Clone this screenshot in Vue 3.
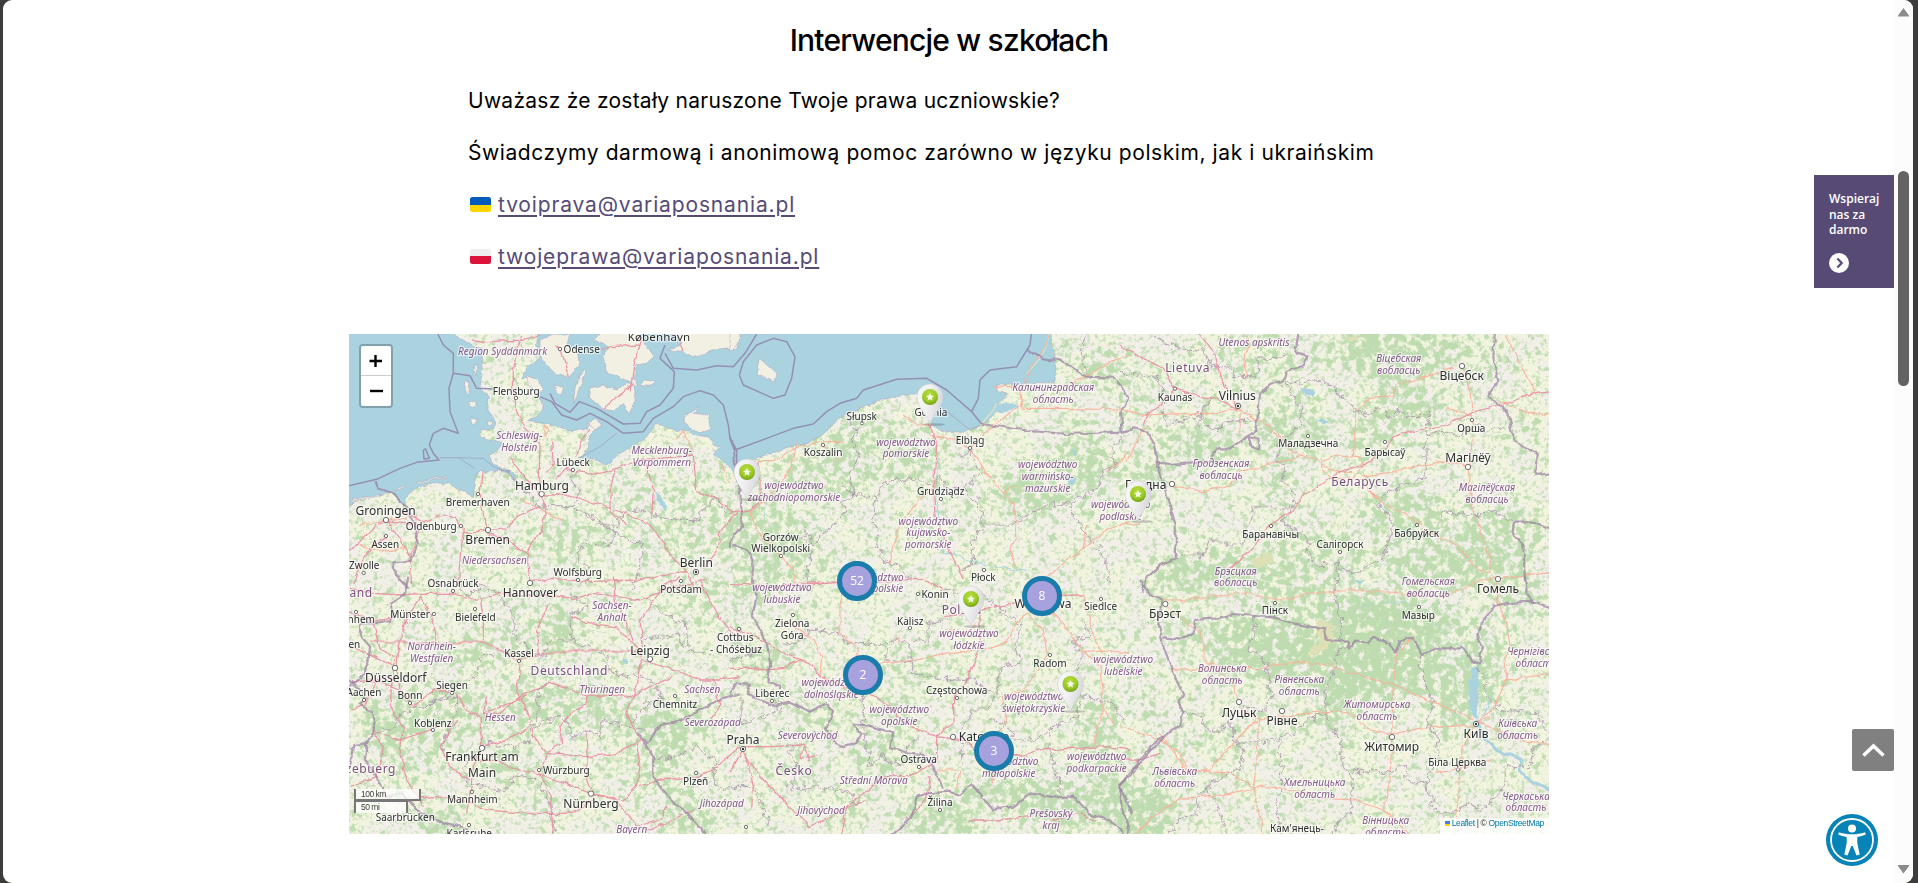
<script setup>
const W = 1200
const H = 500

// The map is described in six sheets, each drawn at triple scale.
const sheets = [
  { x: -9, y: -9 },
  { x: 381, y: -9 },
  { x: 771, y: -9 },
  { x: -9, y: 246 },
  { x: 381, y: 246 },
  { x: 771, y: 246 },
]
const at = (i) => `translate(${sheets[i].x} ${sheets[i].y}) scale(.33333)`

const sea = [
  [0, '20,20 295,20 345,27 350,35 370,45 400,65 430,70 426,110 425,150 420,190 445,215 440,240 455,270 470,290 460,312 420,315 415,335 465,345 485,360 470,375 450,390 460,420 490,430 515,440 535,478 510,450 480,434 440,442 420,435 405,460 400,515 375,500 350,490 330,470 240,483 205,505 190,545 165,515 150,503 60,522 20,548'],
  [0, '590,20 590,60 600,100 560,130 545,160 575,155 600,170 590,185 570,190 600,220 610,250 590,275 560,290 620,295 660,310 700,320 740,310 760,280 785,300 750,330 745,370 720,398 760,402 800,420 830,390 870,370 920,335 950,295 1000,315 1040,320 1070,330 1100,335 1120,350 1140,370 1120,385 1150,410 1180,432 1195,465 1235,405 1270,395 1330,370 1410,350 1450,330 1480,300 1500,275 1570,245 1610,230 1680,210 1725,207 1760,230 1745,245 1770,290 1800,318 1870,322 1920,300 1960,270 1975,235 2005,205 1970,200 1965,180 2020,178 2070,172 2140,175 2145,120 2140,60 2130,20'],
]
const islands = [
  [0, '600,45 640,27 690,30 680,60 715,80 720,115 690,150 650,150 620,120 600,90'],
  [0, '765,45 785,20 900,20 915,60 940,95 920,115 890,120 880,155 900,185 870,170 830,150 800,140 785,95 810,70 790,55'],
  [0, '745,190 790,180 830,195 855,180 880,170 885,200 880,240 870,268 850,235 820,255 785,248 750,220'],
  [0, '730,130 738,140 715,200 700,235 705,190'],
  [0, '560,150 590,160 612,195 590,205 565,180'],
  [0, '640,180 670,190 665,208 645,200'],
  [0, '910,165 950,170 935,182 905,178'],
  [0, '985,75 1020,60 1010,20 1205,20 1190,70 1130,75 1060,95 1030,80'],
  [0, '745,290 765,280 785,300 765,315'],
  [0, '1030,275 1075,245 1062,265 1105,270 1110,310 1080,320 1050,310 1030,295'],
  [0, '378,165 390,175 385,210 375,200'],
  [0, '385,235 405,228 412,242 395,250'],
  [0, '395,275 418,285 400,300'],
  [0, '402,120 410,120 408,150 400,145'],
  [0, '440,288 456,290 450,302 440,300'],
  [0, '160,495 200,482 200,486 165,499'],
  [0, '230,470 320,455 320,459 235,474'],
  [0, '30,528 120,508 120,512 30,533'],
  [1, '88,100 138,145 132,170 78,150'],
  [1, '0,20 30,27 30,45 10,75 0,78'],
]
const water = [
  [1, '800,235 835,235 870,240 830,260 795,262'],
  [5, '1055,260 1075,262 1078,300 1072,350 1070,420 1060,410 1048,370 1042,310 1055,290'],
  [0, '945,500 965,520 985,545 975,555 950,525'],
  [3, '845,235 868,240 865,250 850,246'],
  [2, '540,185 580,195 575,212 550,208'],
  [2, '585,285 630,285 610,295'],
  [1, '1010,450 1040,460 1030,480 1015,475'],
  [1, '1025,370 1040,385 1035,400'],
  [1, '930,480 945,490 935,500'],
  [1, '102,555 108,570 104,585'],
  [5, '690,0 735,0 720,10'],
]
const rivers = [
  [5, '1070,420 1090,470 1130,510 1180,530 1210,540 1195,570 1240,610 1300,635', 9],
  [5, '1110,350 1095,400 1075,420', 3],
  [1, '620,530 640,680 700,700 770,720 830,730 900,740', 3],
  [1, '620,360 625,420 615,480 618,530', 2],
  [5, '720,80 830,65 900,80 980,170 1040,210', 2],
]

const country = [
  [1, '10,660 60,680 70,720 65,780'],
  [1, '0,340 12,370 15,420 30,500 35,560 38,600 0,650 0,670'],
  [1, '755,297 900,318 1010,327 1175,320 1215,310 1250,320 1275,360 1285,420 1310,510 1337,600 1338,700 1290,720 1250,760 1240,800'],
  [1, '890,75 940,100 985,105 1020,120 1070,155 1150,158 1180,190 1195,220 1170,265 1175,318'],
  [2, '110,415 150,420 215,415 270,408 290,370 330,370 380,335 405,320 415,260 420,210 450,180 490,165 500,140 555,120 562,95 525,85 535,27'],
  [2, '385,335 415,345 420,370 395,365 385,335'],
  [2, '1125,20 1120,100 1135,170 1105,210 1135,240 1160,255 1180,340 1215,370 1250,390 1245,450 1290,445'],
  [2, '1290,615 1240,590 1185,590 1180,630 1210,660 1215,770'],
  [4, '70,0 80,50 65,110 110,190 120,250 115,310 150,320 150,330'],
  [4, '0,340 20,310 60,315 50,345 130,375 180,365 240,395 290,370 310,395 285,450 330,500 375,490 395,460 370,430 430,440 490,460 480,500 530,520 580,525 610,560 640,625'],
  [4, '480,770 540,720 560,650 600,640 655,635 690,645 725,612 755,650 790,690 850,680 900,640 990,655 1030,650 1080,700 1140,720 1180,760'],
  [4, '1205,700 1170,620 1220,560 1300,470'],
  [5, '60,0 90,45 125,60 115,130 130,200 155,270 190,345 175,360 190,400 180,435 90,500 30,580 0,620 5,690 25,720 20,770'],
  [5, '130,172 160,175 185,180 220,155 225,120 290,115 340,102 400,108 460,112 520,130 615,148 620,180 685,185 690,205 705,185 740,190 760,170 810,190 825,218 840,185 880,170 905,225 960,205 1030,205 1055,245 1080,250 1085,200 1070,180 1085,130 1125,80 1180,68 1240,65 1290,80'],
  [5, '1240,65 1220,40 1215,-10'],
  [3, '1200,340 1110,370 1080,390 1020,425 960,435 920,490 895,460 940,530 940,590 990,660 1030,690 1080,740 1100,770'],
  [3, '205,-10 195,40 155,70 160,100 150,120 105,130 60,130 60,165 90,200 85,250 60,300 27,320'],
  [3, '27,300 60,330 75,360 60,370 95,395 105,445 95,470 80,490 40,495 30,560'],
  [3, '80,490 75,540 110,590 140,650 190,640 230,690 300,725 360,740 380,750'],
  [0, '110,465 115,490 160,505 190,540 225,600 230,660 215,710 160,715 165,750 205,790'],
]
const maritime = [
  [0, '290,20 310,60 340,85 340,145 390,152 410,190 460,192'],
  [0, '340,145 327,190 330,260 355,325 310,310 280,325 268,360 280,385 297,405 230,412 180,430 110,463 27,482'],
  [0, '250,375 257,372 268,400 252,402 250,375'],
  [0, '600,215 635,230 665,270 710,285 750,265 800,290 850,325 910,320 940,280 1000,245 1030,215 1080,197 1120,210 1150,240 1165,300 1170,340 1190,375 1190,470'],
  [0, '630,205 645,235 690,262 718,230 770,250 850,297 900,295 920,260 960,240 1000,190 1003,140 960,100 975,60'],
  [0, '975,85 1000,130 1070,135 1130,122 1180,125 1215,85 1250,27'],
  [1, '28,150 40,110 80,60 130,40 170,50 195,95 185,160 165,210 130,220 85,200 40,180 28,150'],
  [1, '0,335 15,375 110,340 190,310 250,297 290,260 330,235 380,220 400,195 500,163 590,160 650,195 725,260 755,297'],
  [1, '905,20 900,60 860,125 780,135 750,165 745,220 725,260'],
]
const lightSea = [
  [0, '300,398 355,398 405,430'],
  [0, '355,398 430,400 460,425 500,440'],
  [0, '830,325 780,365 720,398'],
  [1, '640,250 720,315 752,300'],
]
const region = [
  [0, '480,432 520,450 535,480 570,510 600,545 700,545 720,500 690,450 720,440'],
  [0, '690,545 740,570 790,600 830,600 850,560 900,555 1000,590 1060,590 1100,540 1130,520 1165,570'],
  [0, '790,600 850,640 905,660 905,730 870,790'],
  [0, '715,670 760,655 810,660 830,610'],
  [0, '715,670 720,710 750,740 740,790'],
  [1, '350,280 380,310 370,340 385,400 360,450 375,510 340,485 370,510 440,520 430,590 445,620 440,660 460,710 510,720 540,770'],
  [1, '440,520 460,470 540,460 600,480 635,450 640,490 700,490 740,530 760,600 730,650 730,720 690,740'],
  [1, '690,390 720,380 750,440 700,490'],
  [1, '760,600 850,600 870,580 940,545 1020,530 1035,590 1060,600 1070,640 1110,670 1130,720 1140,780'],
  [1, '1170,340 1140,390 1160,420 1120,440 1100,490 1030,530'],
  [1, '210,640 230,620 250,660 330,575 350,560 330,530 375,505'],
  [1, '225,640 245,700 230,750 235,790'],
  [1, '1065,30 1055,110 1080,150'],
  [2, '100,30 150,60 220,80 250,70 270,120 330,130 345,155 410,155 415,100 500,95'],
  [2, '0,145 60,150 110,155 130,180 130,260 140,300 180,290 235,270 280,220 250,250 235,300 290,310 320,290 400,285'],
  [2, '490,175 540,240 545,300 480,350 465,410 495,420 485,470 520,500 525,540 490,590 560,640 570,700 590,720 650,715 650,770'],
  [2, '490,175 610,165 680,230 740,270 790,250 810,280 840,255 890,280 930,260 920,330 915,460 850,480 790,510 780,540 820,600 790,700 700,750 650,720'],
  [2, '920,330 990,320 1020,335 1060,300 1100,320 1150,300'],
  [2, '950,600 970,560 1080,570 1120,560 1180,590'],
  [2, '530,550 400,545 390,600 370,650 340,665 270,640 250,690 175,685'],
  [3, '340,-10 380,50 420,20 470,40 520,100 530,180 560,190 560,220 610,225 640,180 700,180 690,100 740,80 690,40'],
  [3, '460,230 430,230 400,300 350,310 300,360 250,380 180,400 160,450 110,450'],
  [3, '250,380 350,350 350,410 310,470 310,520 380,550 440,490 520,500 580,480 570,440 600,390 590,330 630,300'],
  [3, '580,440 660,410 700,450 690,475 750,450 780,470 790,420 870,440 920,450'],
  [3, '700,180 800,230 810,280 900,290 940,310 970,350 920,370 870,440'],
  [3, '910,180 1010,165 1040,210 1120,225'],
  [3, '380,550 370,600 420,620 500,630 520,580 580,590 620,640 640,720 640,770'],
  [3, '915,50 970,100 1040,130 1040,200'],
  [3, '950,540 1040,520 1070,500 1130,550 1120,600 1150,630 1200,620'],
  [4, '0,240 70,220 110,190'],
  [4, '160,190 220,180 240,150 320,160 350,190 420,190 470,200 465,240 540,245 550,280 640,295 730,300 790,340 780,390 730,390 700,440 690,500 700,560'],
  [4, '540,190 590,180 600,130 650,120'],
  [4, '540,245 540,190 470,180'],
  [4, '800,350 810,260 870,250 860,200 870,140 830,100 740,40 640,30'],
  [4, '780,420 830,430 850,480 910,480 970,440 1040,410 1060,350 1150,370 1180,420'],
  [4, '965,440 960,500 975,570 990,640'],
  [4, '1050,350 1040,280 1055,230 1030,180 1080,170 1060,120'],
  [4, '440,290 400,350 400,430'],
  [4, '30,350 30,430 130,400 160,390 130,350'],
  [4, '175,500 200,560 180,630 260,620 370,640 370,680 400,650'],
  [4, '400,430 420,560 460,530 520,560'],
  [4, '0,620 70,620 100,690 120,740'],
  [4, '560,480 530,500 530,520'],
  [5, '190,395 240,405 265,450 300,455 330,420 345,490 380,485 460,480 520,460 580,410 620,400 615,330 640,280 660,210 690,190'],
  [5, '400,108 405,150 390,200 440,250 455,350 430,390 370,380'],
  [5, '345,490 370,510 360,570 320,580 250,630 280,650 310,730 330,770'],
  [5, '480,480 485,600 470,680 485,770'],
  [5, '615,400 660,480 670,560 700,600 690,700 640,740 640,770'],
  [5, '695,575 810,575 850,555 860,600 920,610 930,570 960,540 950,470 920,430 940,370 900,260 905,225'],
  [5, '920,610 940,690 1000,700 1050,670 1080,690 1140,640 1160,560 1230,560 1240,510 1290,470 1250,400 1150,390 1100,350 1100,300 1070,260'],
  [5, '150,760 170,720 230,700 240,640 280,620'],
  [5, '655,0 640,40 665,120 655,180'],
]
const motorways = [
  [0, '400,45 440,50 560,45 600,30'],
  [0, '548,30 530,70 520,140 520,180 530,260 555,310 600,360 598,430 600,510 620,560 600,620 560,680 570,770'],
  [0, '645,60 665,80 685,150'],
  [0, '780,75 815,65 900,60 905,27'],
  [0, '900,60 880,130 870,200'],
  [0, '795,250 830,215 880,175'],
  [0, '1010,30 1030,80'],
  [0, '635,350 640,420 620,440'],
  [0, '650,460 680,430 700,440 780,445 830,430 900,405 960,400 1060,390 1070,500 1130,520 1180,560'],
  [0, '710,395 720,350 750,310'],
  [0, '600,510 690,510 780,540 870,570 930,600 960,640 990,690 1040,740 1060,790'],
  [0, '825,435 810,500 810,560 860,600'],
  [0, '910,400 940,490 935,580'],
  [0, '600,545 540,570 500,610 430,620 370,620 350,580 310,570 250,590 190,560'],
  [0, '430,440 420,500 430,570 445,620'],
  [0, '510,395 540,440 575,480 600,515'],
  [0, '445,625 510,650 560,690'],
  [0, '370,620 360,700 355,780'],
  [0, '140,585 180,640 215,700'],
  [0, '27,680 70,640 110,600 140,590 230,600'],
  [0, '225,560 235,620 210,700 215,780'],
  [0, '40,780 75,690 100,660 140,640'],
  [0, '1190,560 1140,620 1130,680 1090,730'],
  [0, '570,770 640,760 740,770 900,765 1040,740'],
  [1, '0,565 60,555 90,530 90,470 80,410'],
  [1, '580,230 600,300 620,360 610,480 615,570 650,660 680,720 700,760'],
  [1, '200,775 250,770 320,775 440,760'],
  [2, '0,60 70,100 130,130 165,190 240,215 290,220 350,250'],
  [2, '235,20 280,80 300,150 350,245'],
  [2, '165,190 120,240 80,270 70,300'],
  [2, '330,730 400,670 450,600 520,555 545,515 600,480 660,440 730,420 800,370 820,335 900,315 980,300 1060,260 1150,240 1220,210 1290,200'],
  [3, '27,25 100,40 190,45 240,40 330,40 400,60 440,50 480,40 560,50 620,45 700,55 760,40 830,50 900,60 1000,20 1100,0'],
  [3, '240,50 200,120 180,190 170,260 180,330 220,380'],
  [3, '240,45 280,120 290,185 240,190'],
  [3, '27,95 100,125 160,110'],
  [3, '90,180 200,190 290,190 430,185 480,210 530,240 590,225 700,210 820,215 900,215'],
  [3, '430,180 430,120 420,50'],
  [3, '630,70 590,150 595,220'],
  [3, '690,110 740,130 830,140 870,180 900,210 905,240 1000,270 1080,300 1140,300 1200,290'],
  [3, '820,-10 825,60 860,130 880,180'],
  [3, '910,200 900,120 970,20 1020,-10'],
  [3, '1080,0 1130,100 1170,150 1200,170'],
  [3, '540,250 530,340 570,410 580,470 620,520 740,530 830,520 900,480 860,400 880,350 905,240'],
  [3, '220,380 280,330 350,340 380,390 420,410 425,500 400,560 390,640 380,700'],
  [3, '180,330 90,300 27,310'],
  [3, '420,400 480,400 540,350 630,310 740,345 800,345 870,350 930,320 1000,290'],
  [3, '740,345 740,370 690,400 660,440 665,490 620,520 600,580 630,650 640,760'],
  [3, '430,500 500,480 570,440'],
  [3, '400,540 460,540 540,570 600,585 680,610 750,640 850,660 890,620 900,560 890,490'],
  [3, '740,450 745,530 740,600 755,640'],
  [3, '760,660 690,700 560,700 440,690 400,670 320,650 200,660'],
  [3, '755,645 820,650 890,740 960,720 980,680'],
  [3, '180,190 160,260 150,380 190,440 180,520 200,600 250,680'],
  [3, '350,420 300,500 330,560 390,600'],
  [3, '30,200 80,220 160,260'],
  [3, '440,350 430,400 560,350'],
  [3, '1120,295 1140,380 1110,420'],
  [3, '1200,500 1130,560 1070,590 960,600 900,620'],
  [3, '890,740 930,750 1060,690'],
  [3, '100,130 120,210 160,230'],
  [3, '27,390 80,370 110,300 160,290'],
  [3, '100,450 180,480 240,460 300,440'],
  [3, '27,620 110,590 130,500 100,450'],
  [4, '0,10 120,20 200,15 340,10'],
  [4, '440,10 560,-5 610,10 640,30'],
  [4, '640,110 720,100 800,80 860,70 900,50 1060,48'],
  [4, '0,140 80,170 160,220 240,250 270,290 340,320 440,350 520,420 560,450 620,470 700,480 750,520 880,525 930,510 1130,500 1200,510'],
  [4, '0,265 60,265 110,270 160,265 210,240'],
  [4, '740,60 750,100 750,200 710,310 670,350 672,430 640,450 620,470 620,540 580,570 540,590 460,590 430,620 350,680 330,770'],
  [4, '40,520 100,600 180,680 240,740 340,690 410,660'],
  [4, '40,500 120,500 220,495 240,540'],
  [4, '40,510 0,580'],
  [4, '50,530 70,620 65,680'],
  [4, '220,500 210,540 260,520'],
  [4, '720,720 800,720 900,710'],
  [4, '960,720 1050,700 1100,720'],
  [4, '600,590 590,660 530,720'],
  [5, '0,540 60,540 120,520'],
]
const trunks = [
  [0, '590,340 630,320 610,300 620,345'],
  [0, '540,525 590,545 670,590'],
  [0, '1010,340 1030,320 1060,380'],
  [0, '1140,420 1170,480'],
  [0, '60,600 200,580'],
  [0, '60,660 120,680 200,670'],
  [1, '80,410 130,410 190,370 270,350 340,350'],
  [1, '200,350 190,410 150,480 90,540 60,560'],
  [1, '270,355 330,410'],
  [1, '60,560 80,620 140,680 190,740 195,780'],
  [1, '520,270 560,300 600,300'],
  [1, '600,330 660,340 720,370 760,430 800,480 850,540 860,620 840,670 855,720'],
  [1, '720,370 780,310 870,240'],
  [1, '795,185 870,190 880,250 1000,250 1170,255'],
  [1, '875,240 870,200 900,130 950,60 955,27'],
  [1, '1000,180 1060,160 1140,110 1200,90'],
  [1, '820,500 860,480'],
  [1, '620,480 560,530 500,620 480,720'],
  [1, '1200,590 1120,620 1060,670 990,720 940,770'],
  [1, '1060,670 1070,600'],
  [1, '1130,440 1200,380'],
  [2, '0,250 60,270 220,265 290,265 350,250 440,300 520,380 600,410 640,440 700,440'],
  [2, '380,155 370,100 390,60 380,27'],
  [2, '360,255 360,330'],
  [2, '605,405 650,390 720,395 730,420 700,460 640,460 605,430 605,405'],
  [2, '700,390 710,260 750,220 820,215 830,180 900,160 1000,130'],
  [2, '155,480 250,500 330,480 360,440 450,420 550,390'],
  [2, '20,410 60,330 80,300'],
  [2, '730,455 820,440 960,410 1040,425'],
  [2, '1030,130 1050,200 1060,300 1050,420 1045,480 1060,560 1110,700 1110,750'],
  [2, '720,465 780,530 880,580 960,640 1010,660 1060,720 1110,750'],
  [2, '1140,230 1250,270 1290,265'],
  [2, '1160,30 1210,140 1245,200'],
  [2, '1060,270 980,250'],
  [2, '1140,760 1290,740'],
  [2, '0,600 60,595'],
  [4, '340,30 330,80 330,160 380,200 390,270'],
  [4, '390,280 460,250 560,240 640,220 740,210'],
  [4, '180,130 250,180 275,230 270,290'],
  [4, '640,170 660,150 700,160 740,130'],
  [4, '920,80 860,130 830,190 760,210'],
  [4, '960,90 1000,130 1060,210 1110,260 1120,380 1090,500'],
  [4, '900,110 940,150 950,220 920,280 880,330 820,350 830,420 800,470'],
  [4, '1060,215 1120,210 1200,220'],
  [4, '1060,40 1090,170 1120,220'],
  [4, '790,530 790,610'],
  [4, '510,170 510,190'],
  [4, '620,570 690,570 680,620'],
  [4, '1120,380 1150,440'],
  [5, '130,60 200,60 290,45 390,40 480,60 580,40 700,30 850,40 970,50 1060,10 1130,-10'],
  [5, '135,75 200,130 240,160 260,250 320,260'],
  [5, '260,250 340,310 360,380 420,420 520,405 610,395 680,395 740,440 810,465 900,445 1060,435 1110,410'],
  [5, '150,268 420,265 540,245 620,255 700,280 820,315 900,350 1000,390 1060,420'],
  [5, '815,460 820,310 830,220 880,170'],
  [5, '415,420 410,560 400,620 420,700 430,770'],
  [5, '0,440 120,480 180,520 200,570 330,580 400,620 520,630 600,655 700,660 790,690 850,740 870,770'],
  [5, '400,625 280,650 180,655 100,710 50,760'],
  [5, '410,420 340,490 270,570 190,580'],
  [5, '120,460 190,560'],
  [5, '1060,440 1030,500 1020,600 1010,700 1010,740'],
  [5, '1075,430 1130,370 1160,300 1155,240 1170,200 1160,130 1130,60 1130,0'],
  [5, '815,470 810,600 790,690'],
  [5, '1075,430 1110,440 1180,480 1290,490'],
  [5, '1160,300 1290,280'],
  [5, '950,580 1040,560 1110,540'],
]

// Woodland density: sheet, centre, radii, weight
const woods = [
  [0, 640, 660, 110, 60, .5], [0, 950, 500, 120, 60, .35], [0, 1080, 620, 130, 90, .4], [0, 760, 620, 90, 60, .35],
  [0, 930, 660, 60, 90, .35], [0, 340, 700, 80, 50, .2], [0, 1120, 480, 60, 60, .3],
  [1, 300, 440, 150, 100, .55], [1, 400, 330, 110, 70, .5], [1, 100, 620, 120, 110, .6], [1, 900, 510, 110, 70, .8],
  [1, 1060, 400, 90, 90, .6], [1, 560, 400, 90, 90, .5], [1, 1120, 130, 70, 50, .7], [1, 1100, 480, 70, 60, .5],
  [1, 680, 560, 90, 50, .3], [1, 200, 700, 130, 60, .45], [1, 1000, 80, 60, 50, .4],
  [2, 430, 90, 150, 90, .35], [2, 840, 70, 170, 100, .65], [2, 700, 70, 100, 60, .6], [2, 240, 360, 130, 60, .7],
  [2, 520, 310, 120, 90, .6], [2, 850, 240, 130, 80, .6], [2, 480, 470, 60, 90, .5], [2, 80, 450, 70, 60, .55],
  [2, 1150, 640, 130, 110, .6], [2, 840, 560, 120, 90, .65], [2, 600, 690, 160, 100, .5], [2, 300, 740, 200, 60, .8],
  [2, 1080, 100, 90, 100, .35], [2, 960, 730, 180, 70, .7], [2, 760, 350, 100, 60, .5], [2, 1230, 320, 60, 80, .3],
  [2, 1000, 620, 110, 80, .4], [2, 60, 190, 60, 60, .4],
  [3, 660, 150, 55, 65, 1], [3, 400, 220, 80, 50, .65], [3, 140, 440, 80, 90, .7], [3, 330, 400, 130, 100, .5],
  [3, 220, 560, 80, 50, .5], [3, 700, 370, 140, 70, .6], [3, 540, 380, 70, 110, .55], [3, 530, 180, 50, 60, .6],
  [3, 480, 560, 60, 50, .7], [3, 300, 720, 70, 40, .9], [3, 1000, 440, 110, 60, .75], [3, 980, 520, 60, 100, .6],
  [3, 1040, 710, 90, 80, .65], [3, 850, 420, 80, 50, .6], [3, 1090, 60, 90, 60, .4], [3, 880, 570, 90, 80, .35],
  [3, 220, 440, 60, 60, .45], [3, 620, 620, 70, 90, .35], [3, 540, 60, 70, 40, .35],
  [4, 60, 30, 90, 70, .5], [4, 120, 230, 90, 50, .6], [4, 270, 400, 110, 40, .6], [4, 340, 700, 90, 60, .4],
  [4, 450, 520, 80, 70, .55], [4, 620, 720, 130, 60, .75], [4, 820, 630, 160, 50, .7], [4, 1000, 680, 140, 70, .75],
  [4, 1100, 450, 60, 110, .7], [4, 900, 270, 60, 50, .35], [4, 850, 380, 60, 40, .35], [4, 500, 400, 60, 70, .45],
  [4, 560, 250, 100, 60, .35], [4, 180, 560, 90, 60, .3], [4, 940, 120, 50, 60, .35], [4, 1150, 620, 70, 80, .6],
  [5, 220, 160, 80, 60, .5], [5, 360, 200, 90, 110, .75], [5, 500, 210, 130, 100, .85], [5, 700, 260, 110, 110, 1],
  [5, 830, 250, 110, 100, .9], [5, 770, 110, 170, 70, 1], [5, 930, 140, 110, 60, .8], [5, 1010, 310, 110, 100, .7],
  [5, 1100, 220, 35, 130, .8], [5, 650, 340, 60, 70, .9], [5, 60, 700, 90, 90, .85], [5, 280, 480, 120, 35, .5],
  [5, 620, 430, 100, 40, .55], [5, 520, 50, 130, 50, .6], [5, 1000, 430, 50, 60, .5], [5, 1150, 430, 70, 60, .4],
  [5, 130, 680, 70, 60, .5], [5, 160, 20, 90, 40, .5], [5, 1200, 40, 70, 60, .6], [5, 80, 380, 60, 60, .3],
]
const marsh = [
  [5, '600,125 640,130 645,190 610,215 570,235 570,205 595,180 590,150'],
  [2, '395,705 440,680 465,700 440,725 400,720'],
  [2, '680,30 720,30 715,45 690,50'],
]

// Labels: sheet, centre x, centre y, text, kind
const labels = [
  [0, 957, 37, 'København', 'M'], [0, 488, 78, 'Region Syddanmark', 'r'], [0, 725, 74, 'Odense', 'c'], [0, 529, 198, 'Flensburg', 'c'],
  [0, 538, 332, 'Schleswig-', 'r'], [0, 538, 367, 'Holstein', 'r'], [0, 965, 377, 'Mecklenburg-', 'r'], [0, 965, 412, 'Vorpommern', 'r'],
  [0, 700, 412, 'Lübeck', 'c'], [0, 606, 481, 'Hamburg', 'C'], [0, 413, 531, 'Bremerhaven', 'c'], [0, 137, 556, 'Groningen', 'C'],
  [0, 274, 603, 'Oldenburg', 'c'], [0, 443, 644, 'Bremen', 'C'], [0, 136, 657, 'Assen', 'c'], [0, 463, 706, 'Niedersachsen', 'r'],
  [0, 73, 721, 'Zwolle', 'c'], [0, 713, 741, 'Wolfsburg', 'c'], [0, 1069, 712, 'Berlin', 'C'], [0, 339, 775, 'Osnabrück', 'c'],
  [1, 395, 273, 'Słupsk', 'c'], [1, 603, 261, 'Gdynia', 'c'], [1, 279, 382, 'Koszalin', 'c'], [1, 528, 351, 'województwo', 'r'],
  [1, 528, 386, 'pomorskie', 'r'], [1, 720, 345, 'Elbląg', 'c'], [1, 970, 187, 'Калининградская', 'r'], [1, 970, 222, 'область', 'r'],
  [1, 953, 418, 'województwo', 'r'], [1, 953, 454, 'warmińsko-', 'r'], [1, 953, 489, 'mazurskie', 'r'], [1, 632, 499, 'Grudziądz', 'c'],
  [1, 192, 480, 'województwo', 'r'], [1, 192, 516, 'zachodniopomorskie', 'r'], [1, 595, 588, 'województwo', 'r'], [1, 595, 623, 'kujawsko-', 'r'],
  [1, 595, 659, 'pomorskie', 'r'], [1, 152, 636, 'Gorzów', 'c'], [1, 152, 671, 'Wielkopolski', 'c'], [1, 760, 758, 'Płock', 'c'],
  [1, 432, 756, 'województwo', 'r'], [1, 432, 791, 'wielkopolskie', 'r'],
  [2, 402, 52, 'Utenos apskritis', 'r'], [2, 203, 128, 'Lietuva', 'N'], [2, 165, 216, 'Kaunas', 'c'], [2, 352, 212, 'Vilnius', 'C'],
  [2, 836, 100, 'Віцебская', 'r'], [2, 836, 136, 'вобласць', 'r'], [2, 1025, 153, 'Віцебск', 'C'], [2, 1054, 309, 'Орша', 'c'],
  [2, 565, 355, 'Маладзечна', 'c'], [2, 795, 382, 'Барысаў', 'c'], [2, 1044, 398, 'Магілёў', 'C'], [2, 303, 414, 'Гродзенская', 'r'],
  [2, 303, 450, 'вобласць', 'r'], [2, 720, 471, 'Беларусь', 'N'], [2, 77, 480, 'Гродна', 'C'], [2, 1101, 487, 'Магілёўская', 'r'],
  [2, 1101, 522, 'вобласць', 'r'], [2, 2, 539, 'województwo', 'r'], [2, 2, 574, 'podlaskie', 'r'], [2, 452, 628, 'Баранавічы', 'c'],
  [2, 890, 625, 'Бабруйск', 'c'], [2, 660, 659, 'Салігорск', 'c'], [2, 347, 738, 'Брэсцкая', 'r'], [2, 347, 773, 'вобласць', 'r'],
  [2, 925, 769, 'Гомельская', 'r'], [2, 925, 804, 'вобласць', 'r'],
  [3, 1, 39, 'Nederland', 'N'], [3, 571, 38, 'Hannover', 'C'], [3, 1023, 28, 'Potsdam', 'c'], [3, 210, 102, 'Münster', 'c'],
  [3, 406, 113, 'Bielefeld', 'c'], [3, 48, 119, 'Arnhem', 'c'], [3, 816, 76, 'Sachsen-', 'r'], [3, 816, 111, 'Anhalt', 'r'],
  [3, 13, 194, 'Eersen', 'c'], [3, 275, 199, 'Nordrhein-', 'r'], [3, 275, 235, 'Westfalen', 'r'], [3, 537, 221, 'Kassel', 'c'],
  [3, 930, 211, 'Leipzig', 'C'], [3, 1186, 171, 'Cottbus', 'c'], [3, 1188, 207, '- Chóśebuz', 'c'], [3, 688, 273, 'Deutschland', 'N'],
  [3, 167, 293, 'Düsseldorf', 'C'], [3, 336, 316, 'Siegen', 'c'], [3, 72, 338, 'Aachen', 'c'], [3, 210, 347, 'Bonn', 'c'],
  [3, 787, 327, 'Thüringen', 'r'], [3, 1087, 327, 'Sachsen', 'r'], [3, 1005, 373, 'Chemnitz', 'c'], [3, 481, 411, 'Hessen', 'r'],
  [3, 278, 429, 'Koblenz', 'c'], [3, 1118, 427, 'Severozápad', 'r'], [3, 426, 530, 'Frankfurt am', 'C'], [3, 426, 577, 'Main', 'C'],
  [3, 679, 572, 'Würzburg', 'c'], [3, 64, 567, 'Lëtzebuerg', 'N'], [3, 1067, 603, 'Plzeň', 'c'], [3, 397, 657, 'Mannheim', 'c'],
  [3, 753, 672, 'Nürnberg', 'C'], [3, 196, 713, 'Saarbrücken', 'c'], [3, 1145, 671, 'Jihozápad', 'r'], [3, 388, 759, 'Karlsruhe', 'c'],
  [3, 875, 749, 'Bayern', 'r'],
  [4, 156, 23, 'województwo', 'r'], [4, 156, 58, 'lubuskie', 'r'], [4, 615, 42, 'Konin', 'c'], [4, 695, 89, 'Polska', 'N'],
  [4, 939, 72, 'Warszawa', 'C'], [4, 1112, 80, 'Siedlce', 'c'], [4, 187, 129, 'Zielona', 'c'], [4, 187, 165, 'Góra', 'c'],
  [4, 541, 123, 'Kalisz', 'c'], [4, 717, 161, 'województwo', 'r'], [4, 717, 197, 'łódzkie', 'r'], [4, 960, 249, 'Radom', 'c'],
  [4, 1180, 238, 'województwo', 'r'], [4, 1180, 273, 'lubelskie', 'r'], [4, 304, 307, 'województwo', 'r'], [4, 304, 343, 'dolnośląskie', 'r'],
  [4, 127, 339, 'Liberec', 'c'], [4, 680, 330, 'Częstochowa', 'c'], [4, 911, 349, 'województwo', 'r'], [4, 911, 384, 'świętokrzyskie', 'r'],
  [4, 508, 387, 'województwo', 'r'], [4, 508, 423, 'opolskie', 'r'], [4, 233, 465, 'Severovýchod', 'r'], [4, 39, 478, 'Praha', 'C'],
  [4, 762, 471, 'Katowice', 'C'], [4, 566, 539, 'Ostrava', 'c'], [4, 836, 544, 'województwo', 'r'], [4, 836, 579, 'małopolskie', 'r'],
  [4, 1100, 530, 'województwo', 'r'], [4, 1100, 565, 'podkarpackie', 'r'], [4, 192, 573, 'Česko', 'N'], [4, 431, 600, 'Střední Morava', 'r'],
  [4, 630, 667, 'Žilina', 'c'], [4, 273, 690, 'Jihovýchod', 'r'], [4, 963, 699, 'Prešovský', 'r'], [4, 963, 735, 'kraj', 'r'],
  [5, 135, 102, 'Брэст', 'C'], [5, 465, 91, 'Пінск', 'c'], [5, 895, 107, 'Мазыр', 'c'], [5, 1134, 26, 'Гомель', 'C'],
  [5, 307, 265, 'Волинська', 'r'], [5, 307, 300, 'область', 'r'], [5, 538, 297, 'Рівненська', 'r'], [5, 538, 333, 'область', 'r'],
  [5, 1248, 214, 'Чернігівська', 'r'], [5, 1248, 250, 'область', 'r'], [5, 357, 398, 'Луцьк', 'C'], [5, 486, 421, 'Рівне', 'C'],
  [5, 771, 373, 'Житомирська', 'r'], [5, 771, 408, 'область', 'r'], [5, 1193, 430, 'Київська', 'r'], [5, 1193, 466, 'область', 'r'],
  [5, 1068, 461, 'Київ', 'C'], [5, 815, 501, 'Житомир', 'C'], [5, 1012, 547, 'Біла Церква', 'c'], [5, 164, 575, 'Львівська', 'r'],
  [5, 164, 611, 'область', 'r'], [5, 584, 607, 'Хмельницька', 'r'], [5, 584, 643, 'область', 'r'], [5, 1218, 648, 'Черкаська', 'r'],
  [5, 1218, 683, 'область', 'r'], [5, 797, 722, 'Вінницька', 'r'], [5, 797, 757, 'область', 'r'], [5, 531, 746, "Кам'янець-", 'c'],
]
const rise = { c: 3.6, r: 3.6, M: 4, C: 4.3, N: 4.3 }
const labelX = (l) => +(l[1] / 3 + sheets[l[0]].x).toFixed(1)
const labelY = (l) => +(l[2] / 3 + sheets[l[0]].y + rise[l[4]]).toFixed(1)

// Town dots: sheet, x, y, size
const towns = [
  [0, 660, 72, 5], [0, 528, 219, 5], [0, 699, 435, 5], [0, 605, 507, 8], [0, 414, 507, 5], [0, 138, 585, 8], [0, 363, 603, 5],
  [0, 138, 633, 5], [0, 444, 615, 8], [0, 71, 744, 5], [0, 714, 765, 5], [0, 1068, 741, 8, 1], [0, 570, 774, 8], [0, 1023, 768, 5],
  [1, 396, 294, 5], [1, 279, 360, 5], [1, 720, 369, 5], [1, 633, 522, 5], [1, 153, 693, 5], [1, 762, 735, 5],
  [2, 165, 191, 5], [2, 354, 243, 8, 1], [2, 1026, 123, 8], [2, 1056, 285, 5], [2, 564, 333, 5], [2, 795, 351, 5], [2, 1044, 426, 8],
  [2, 156, 477, 8], [2, 453, 603, 5], [2, 891, 600, 5], [2, 660, 681, 5], [2, 1134, 762, 8],
  [3, 339, 33, 5], [3, 282, 102, 5], [3, 405, 87, 5], [3, 48, 96, 5], [3, 537, 243, 5], [3, 930, 237, 8], [3, 165, 264, 8],
  [3, 336, 339, 5], [3, 72, 360, 5], [3, 210, 369, 5], [3, 1005, 348, 5], [3, 279, 450, 5], [3, 426, 504, 8], [3, 597, 570, 5],
  [3, 1068, 579, 5], [3, 396, 636, 5], [3, 753, 641, 8], [3, 387, 735, 5],
  [4, 189, 105, 5], [4, 27, 147, 5], [4, 564, 42, 5], [4, 540, 144, 5], [4, 1113, 57, 5], [4, 960, 225, 5], [4, 126, 363, 5],
  [4, 681, 354, 5], [4, 39, 507, 8, 1], [4, 669, 471, 8], [4, 567, 561, 5], [4, 630, 690, 5], [4, 48, 741, 5],
  [5, 136, 72, 8], [5, 465, 69, 5], [5, 897, 81, 5], [5, 357, 366, 8], [5, 486, 393, 8], [5, 1068, 432, 8, 1], [5, 816, 471, 8],
  [5, 1014, 569, 5],
]

const clusters = [
  { x: 508, y: 247, n: 52 },
  { x: 693, y: 262, n: 8 },
  { x: 514, y: 341, n: 2 },
  { x: 645, y: 417, n: 3 },
]
const pins = [
  { x: 581, y: 63 },
  { x: 398, y: 138 },
  { x: 789, y: 160 },
  { x: 622, y: 265 },
  { x: 721.5, y: 350 },
]
</script>

<template>
  <div class="window">
    <main class="page">
      <section class="intro">
        <h2><span>Interwencje w szkołach</span></h2>
        <div class="copy">
          <p class="p1">Uważasz że zostały naruszone Twoje prawa uczniowskie?</p>
          <p class="p2">Świadczymy darmową i anonimową pomoc zarówno w języku polskim, jak i ukraińskim</p>
          <p><i class="flag ua"></i><a>tvoiprava@variaposnania.pl</a></p>
          <p><i class="flag pl"></i><a>twojeprawa@variaposnania.pl</a></p>
        </div>
      </section>

      <section class="map">
        <svg class="tiles" :width="W" :height="H" :viewBox="`0 0 ${W} ${H}`">
          <defs>
            <filter id="fields" x="0" y="0" width="100%" height="100%" color-interpolation-filters="sRGB">
              <feTurbulence type="fractalNoise" baseFrequency=".035" numOctaves="5" seed="4" />
              <feColorMatrix values="0 0 0 0 .95  0 0 0 0 .956  0 0 0 0 .875  7 0 0 0 -3" />
            </filter>
            <filter id="groves" x="0" y="0" width="100%" height="100%" color-interpolation-filters="sRGB">
              <feTurbulence type="fractalNoise" baseFrequency=".24" numOctaves="4" seed="11" />
              <feColorMatrix values="0 0 0 0 .78  0 0 0 0 .88  0 0 0 0 .72  0 7 0 0 -3.85" />
            </filter>
            <filter id="woods" filterUnits="userSpaceOnUse" x="0" y="0" :width="W" :height="H" color-interpolation-filters="sRGB">
              <feGaussianBlur in="SourceGraphic" stdDeviation="9" result="area" />
              <feTurbulence type="fractalNoise" baseFrequency=".13" numOctaves="5" seed="23" />
              <feColorMatrix values="0 0 0 0 0  0 0 0 0 0  0 0 0 0 0  0 0 1 0 0" result="noise" />
              <feComposite in="area" in2="noise" operator="arithmetic" k2=".3" k3="1" />
              <feColorMatrix values="0 0 0 0 .745  0 0 0 0 .862  0 0 0 0 .69  0 0 0 7 -4.2" />
            </filter>
            <filter id="wobble" filterUnits="userSpaceOnUse" x="-30" y="-30" width="2300" height="860">
              <feTurbulence type="fractalNoise" baseFrequency=".03" numOctaves="3" seed="7" result="n" />
              <feDisplacementMap in="SourceGraphic" in2="n" scale="16" xChannelSelector="R" yChannelSelector="G" />
            </filter>
            <filter id="jagged" filterUnits="userSpaceOnUse" x="-30" y="-30" width="2300" height="860">
              <feTurbulence type="fractalNoise" baseFrequency=".045" numOctaves="3" seed="31" result="n" />
              <feDisplacementMap in="SourceGraphic" in2="n" scale="34" xChannelSelector="R" yChannelSelector="G" />
            </filter>
            <radialGradient id="green" cx=".45" cy=".3" r=".75">
              <stop offset="0" stop-color="#b5dc3a" />
              <stop offset=".6" stop-color="#9aca28" />
              <stop offset="1" stop-color="#6f9c12" />
            </radialGradient>
            <linearGradient id="shell" x1="0" x2="1" y1="0" y2=".3">
              <stop offset="0" stop-color="#f8f8f8" />
              <stop offset=".5" stop-color="#f1f1f2" />
              <stop offset="1" stop-color="#d9d9dc" />
            </linearGradient>
          </defs>

          <rect :width="W" :height="H" fill="#f2efe9" />
          <rect :width="W" :height="H" filter="url(#fields)" />
          <rect :width="W" :height="H" filter="url(#groves)" opacity=".8" />
          <g filter="url(#woods)">
            <g v-for="(w, i) in woods" :key="i" :transform="at(w[0])">
              <ellipse :cx="w[1]" :cy="w[2]" :rx="w[3]" :ry="w[4]" fill="#000" :opacity="w[5]" />
            </g>
          </g>
          <g v-for="(p, i) in marsh" :key="'m' + i" :transform="at(p[0])">
            <polygon class="marsh" :points="p[1]" filter="url(#jagged)" />
          </g>
          <g v-for="(p, i) in sea" :key="'s' + i" :transform="at(p[0])">
            <polygon class="sea" :points="p[1]" filter="url(#wobble)" />
          </g>
          <g v-for="(p, i) in islands" :key="'i' + i" :transform="at(p[0])">
            <polygon class="island" :points="p[1]" filter="url(#wobble)" />
          </g>
          <g v-for="(p, i) in water" :key="'w' + i" :transform="at(p[0])">
            <polygon class="water" :points="p[1]" filter="url(#wobble)" />
          </g>
          <g v-for="(p, i) in rivers" :key="'v' + i" :transform="at(p[0])">
            <polyline class="river" :points="p[1]" :stroke-width="p[2]" filter="url(#wobble)" />
          </g>
          <g :transform="at(1)">
            <polyline class="spit" points="958,20 950,60 930,100 890,145" />
            <polyline class="spit" points="752,300 790,255 800,235" />
          </g>
          <g v-for="(p, i) in region" :key="'r' + i" :transform="at(p[0])">
            <polyline class="region" :points="p[1]" filter="url(#jagged)" />
          </g>
          <g v-for="(p, i) in trunks" :key="'t' + i" :transform="at(p[0])">
            <polyline class="trunk" :points="p[1]" filter="url(#wobble)" />
          </g>
          <g v-for="(p, i) in motorways" :key="'y' + i" :transform="at(p[0])">
            <polyline class="motorway" :points="p[1]" filter="url(#wobble)" />
          </g>
          <g v-for="(p, i) in country" :key="'c' + i" :transform="at(p[0])">
            <polyline class="country" :points="p[1]" filter="url(#wobble)" />
          </g>
          <g v-for="(p, i) in maritime" :key="'a' + i" :transform="at(p[0])">
            <polyline class="maritime" :points="p[1]" />
          </g>
          <g v-for="(p, i) in lightSea" :key="'l' + i" :transform="at(p[0])">
            <polyline class="light" :points="p[1]" />
          </g>
          <g v-for="(t, i) in towns" :key="'o' + i" :transform="at(t[0])">
            <circle class="town" :cx="t[1]" :cy="t[2]" :r="t[3]" />
            <circle v-if="t[4]" :cx="t[1]" :cy="t[2]" r="3.5" fill="#333" />
          </g>
          <text v-for="(l, i) in labels" :key="'x' + i" :class="['lb', l[4]]" :x="labelX(l)" :y="labelY(l)">{{ l[3] }}</text>

          <g v-for="(p, i) in pins" :key="'p' + i" :transform="`translate(${p.x} ${p.y})`">
            <ellipse cx="4" cy="27.500" rx="11" ry="1.300" fill="#444" opacity=".28" />
            <path class="shell" d="M0 28C-2 19-13 10-13 0a13 13 0 0 1 26 0C13 10 2 19 0 28Z" fill="url(#shell)" />
            <circle r="8" fill="url(#green)" />
            <path d="M0-4l1.200 2.600 2.800.3-2.100 1.900.6 2.800L0 2.200l-2.500 1.400.6-2.800L-4-1.100l2.800-.3Z" fill="#fff" opacity=".88" />
          </g>
          <g v-for="c in clusters" :key="c.n" :transform="`translate(${c.x} ${c.y})`">
            <circle r="17.500" fill="#a7a1dd" stroke="#1a7cab" stroke-width="5" />
            <text class="count" y="4.300">{{ c.n }}</text>
          </g>
        </svg>

        <div class="zoom">
          <button>
            <svg width="30" height="30"><path d="M14.500 9v12M8.500 15h12.500" /></svg>
          </button>
          <button>
            <svg width="30" height="30"><path d="M9 15h13" /></svg>
          </button>
        </div>
        <div class="scale">
          <div class="km">100 km</div>
          <div class="mi">50 mi</div>
        </div>
        <div class="credit">
          <i></i><a>Leaflet</a><span>&nbsp;| ©&nbsp;</span><a>OpenStreetMap</a>
        </div>
      </section>
    </main>

    <aside class="support">
      <strong>Wspieraj<br />nas za<br />darmo</strong>
      <svg width="20" height="20" viewBox="0 0 20 20">
        <circle cx="10" cy="10" r="10" fill="#fff" />
        <path d="M8.400 5.500 12.700 10 8.400 14.500" fill="none" stroke="#574b76" stroke-width="2.200" />
      </svg>
    </aside>

    <div class="totop">
      <svg width="42" height="42"><path d="M11.500 26.500 21.500 17l10 9.500" fill="none" stroke="#fff" stroke-width="3.600" /></svg>
    </div>

    <svg class="access" width="52" height="52" viewBox="0 0 52 52">
      <circle cx="26" cy="26" r="26" fill="#0783b7" />
      <circle cx="26" cy="26" r="21" fill="none" stroke="#fff" stroke-width="1.800" />
      <circle cx="26" cy="14.500" r="4" fill="#fff" />
      <path d="M13 18.200c8 2.800 18 2.800 26 0l.9 2.400c-2.800 1.100-5.600 1.900-8.600 2.300v6.100l2.400 11.500-3.200.9L26.700 32h-1.400l-3.800 9.400-3.200-.9L20.700 29v-6.100c-3-.4-5.800-1.200-8.600-2.300Z" fill="#fff" />
    </svg>

    <div class="bar">
      <svg width="11" height="9"><path d="M5.500 0 11 7.500V8.500H0V7.500Z" /></svg>
      <div class="thumb"></div>
      <svg width="11" height="9"><path d="M5.500 8.500 11 1V0H0V1Z" /></svg>
    </div>
  </div>
</template>

<style>
body {
  background: #3c3c3b;
}
</style>

<style scoped>
.window {
  position: relative;
  width: 1910px;
  height: 883px;
  margin-left: 3px;
  background: #fff;
  border-radius: 9px;
  overflow: hidden;
  color: #000;
  font-family: Inter, "Open Sans", sans-serif;
}
.page {
  width: 1200px;
  margin-left: 346px;
  height: 883px;
  display: flex;
  flex-direction: column;
}
.intro {
  height: 334px;
  flex: none;
}
h2 {
  margin: 0;
  padding-top: 19px;
  height: 62px;
  box-sizing: border-box;
  font-size: 30px;
  line-height: 42px;
  font-weight: 500;
  letter-spacing: -.8px;
  text-align: center;
  white-space: nowrap;
}
.copy {
  margin-left: 119px;
  padding-top: 23px;
}
.copy p {
  margin: 0 0 20px;
  height: 32px;
  line-height: 32px;
  font-size: 21px;
  white-space: nowrap;
  display: flex;
  align-items: center;
}
.copy a {
  color: #574b76;
  letter-spacing: .85px;
  text-decoration: underline;
  text-decoration-thickness: 2px;
  text-underline-offset: 3px;
}
.p1 { letter-spacing: .26px; }
.p2 { letter-spacing: .58px; }
.flag {
  width: 21px;
  height: 15px;
  margin: 0 7px 2px 2px;
  border-radius: 2.500px;
}
.ua { background: linear-gradient(#005bbb 50%, #ffd500 50%); }
.pl { background: linear-gradient(#eee 50%, #dc143c 50%); }

.map {
  position: relative;
  width: 1200px;
  height: 500px;
  overflow: hidden;
  flex: none;
}
.tiles { display: block; }
polyline { fill: none; stroke-linejoin: round; }
.sea, .water { fill: #aad3df; }
.sea { stroke: #a99fc0; stroke-width: 1.5; }
.island { fill: #f2f0e2; stroke: #a99fc0; stroke-width: 1.5; }
.marsh { fill: #dde0b4; }
.river { stroke: #aad3df; }
.spit { stroke: #d9e3c9; stroke-width: 4; }
.region { stroke: #a58fa8; stroke-width: 3.4; opacity: .72; }
.trunk { stroke: #f9b29c; stroke-width: 3.4; opacity: .95; }
.motorway { stroke: #e990a3; stroke-width: 3.8; opacity: .92; }
.country { stroke: #9c82a3; stroke-width: 6.5; opacity: .72; }
.maritime { stroke: #9490b3; stroke-width: 4.5; }
.light { stroke: #9a9bbb; stroke-width: 2; }
.town { fill: #fff; stroke: #555; stroke-width: 2.5; }
.shell { stroke: #c9c9cc; stroke-width: .5; }
.lb {
  font-family: "Noto Sans", sans-serif;
  font-size: 10px;
  text-anchor: middle;
  fill: #2e2e2e;
  paint-order: stroke;
  stroke: rgba(255, 255, 255, .6);
  stroke-width: 2.500px;
  stroke-linejoin: round;
}
.M { font-size: 11.5px; letter-spacing: .15px; }
.C { font-size: 12px; }
.r { font-style: italic; fill: #85588a; }
.N { font-size: 12px; letter-spacing: .6px; fill: #7a4f7c; }
.count {
  font: 12px "Open Sans", sans-serif;
  fill: #fff;
  text-anchor: middle;
}
.zoom {
  position: absolute;
  left: 10px;
  top: 10px;
  width: 30px;
  border: 2px solid rgba(0, 0, 0, .24);
  border-radius: 4px;
  background-clip: padding-box;
}
.zoom button {
  display: block;
  width: 30px;
  height: 30px;
  padding: 0;
  border: 0;
  background: #fff;
}
.zoom button:first-child { border-bottom: 1px solid #ccc; border-radius: 2px 2px 0 0; }
.zoom button:last-child { border-radius: 0 0 2px 2px; }
.zoom svg { display: block; }
.zoom path { stroke: #000; stroke-width: 2.4; }
.scale {
  position: absolute;
  left: 5px;
  bottom: 21px;
  font: 8.5px/10px "Liberation Sans", Arial, sans-serif;
  letter-spacing: -.5px;
  color: #444;
}
.scale div {
  box-sizing: border-box;
  height: 12px;
  padding-left: 5px;
  border: 2px solid #777;
  border-top: 0;
  background: rgba(255, 255, 255, .75);
}
.km { width: 67px; }
.scale .mi { width: 54px; border-bottom: 0; border-top: 1px solid #777; }
.credit {
  position: absolute;
  right: 0;
  bottom: 0;
  width: 109px;
  height: 16px;
  box-sizing: border-box;
  padding: 0 5px 6px;
  display: flex;
  align-items: center;
  background: rgba(255, 255, 255, .8);
  font: 8.5px "Liberation Sans", Arial, sans-serif;
  letter-spacing: -.35px;
  color: #333;
  white-space: nowrap;
}
.credit i {
  width: 7px;
  height: 5px;
  margin-right: 2px;
  background: linear-gradient(#4c7be1 50%, #ffd500 50%);
}
.credit a { color: #0078a8; }

.support {
  position: absolute;
  left: 1811px;
  top: 175px;
  width: 80px;
  height: 113px;
  box-sizing: border-box;
  padding: 16px 0 0 15px;
  background: #574b76;
  color: #fff;
}
.support strong {
  display: block;
  font: 600 12px/15.600px "Open Sans", sans-serif;
}
.support svg { display: block; margin-top: 15px; }
.totop {
  position: absolute;
  left: 1849px;
  top: 729px;
  width: 42px;
  height: 42px;
  border-radius: 2px;
  background: #808080;
}
.access {
  position: absolute;
  left: 1823px;
  top: 814px;
}
.bar {
  position: absolute;
  right: 0;
  top: 0;
  width: 19px;
  height: 883px;
  box-sizing: border-box;
  padding: 8px 0 9px;
  background: #fcfcfc;
  display: flex;
  flex-direction: column;
  align-items: center;
}
.bar svg { fill: #8b8b8b; flex: none; }
.thumb {
  width: 11px;
  height: 215px;
  margin: 154px 0 auto;
  border-radius: 5.500px;
  background: #636363;
}
</style>
